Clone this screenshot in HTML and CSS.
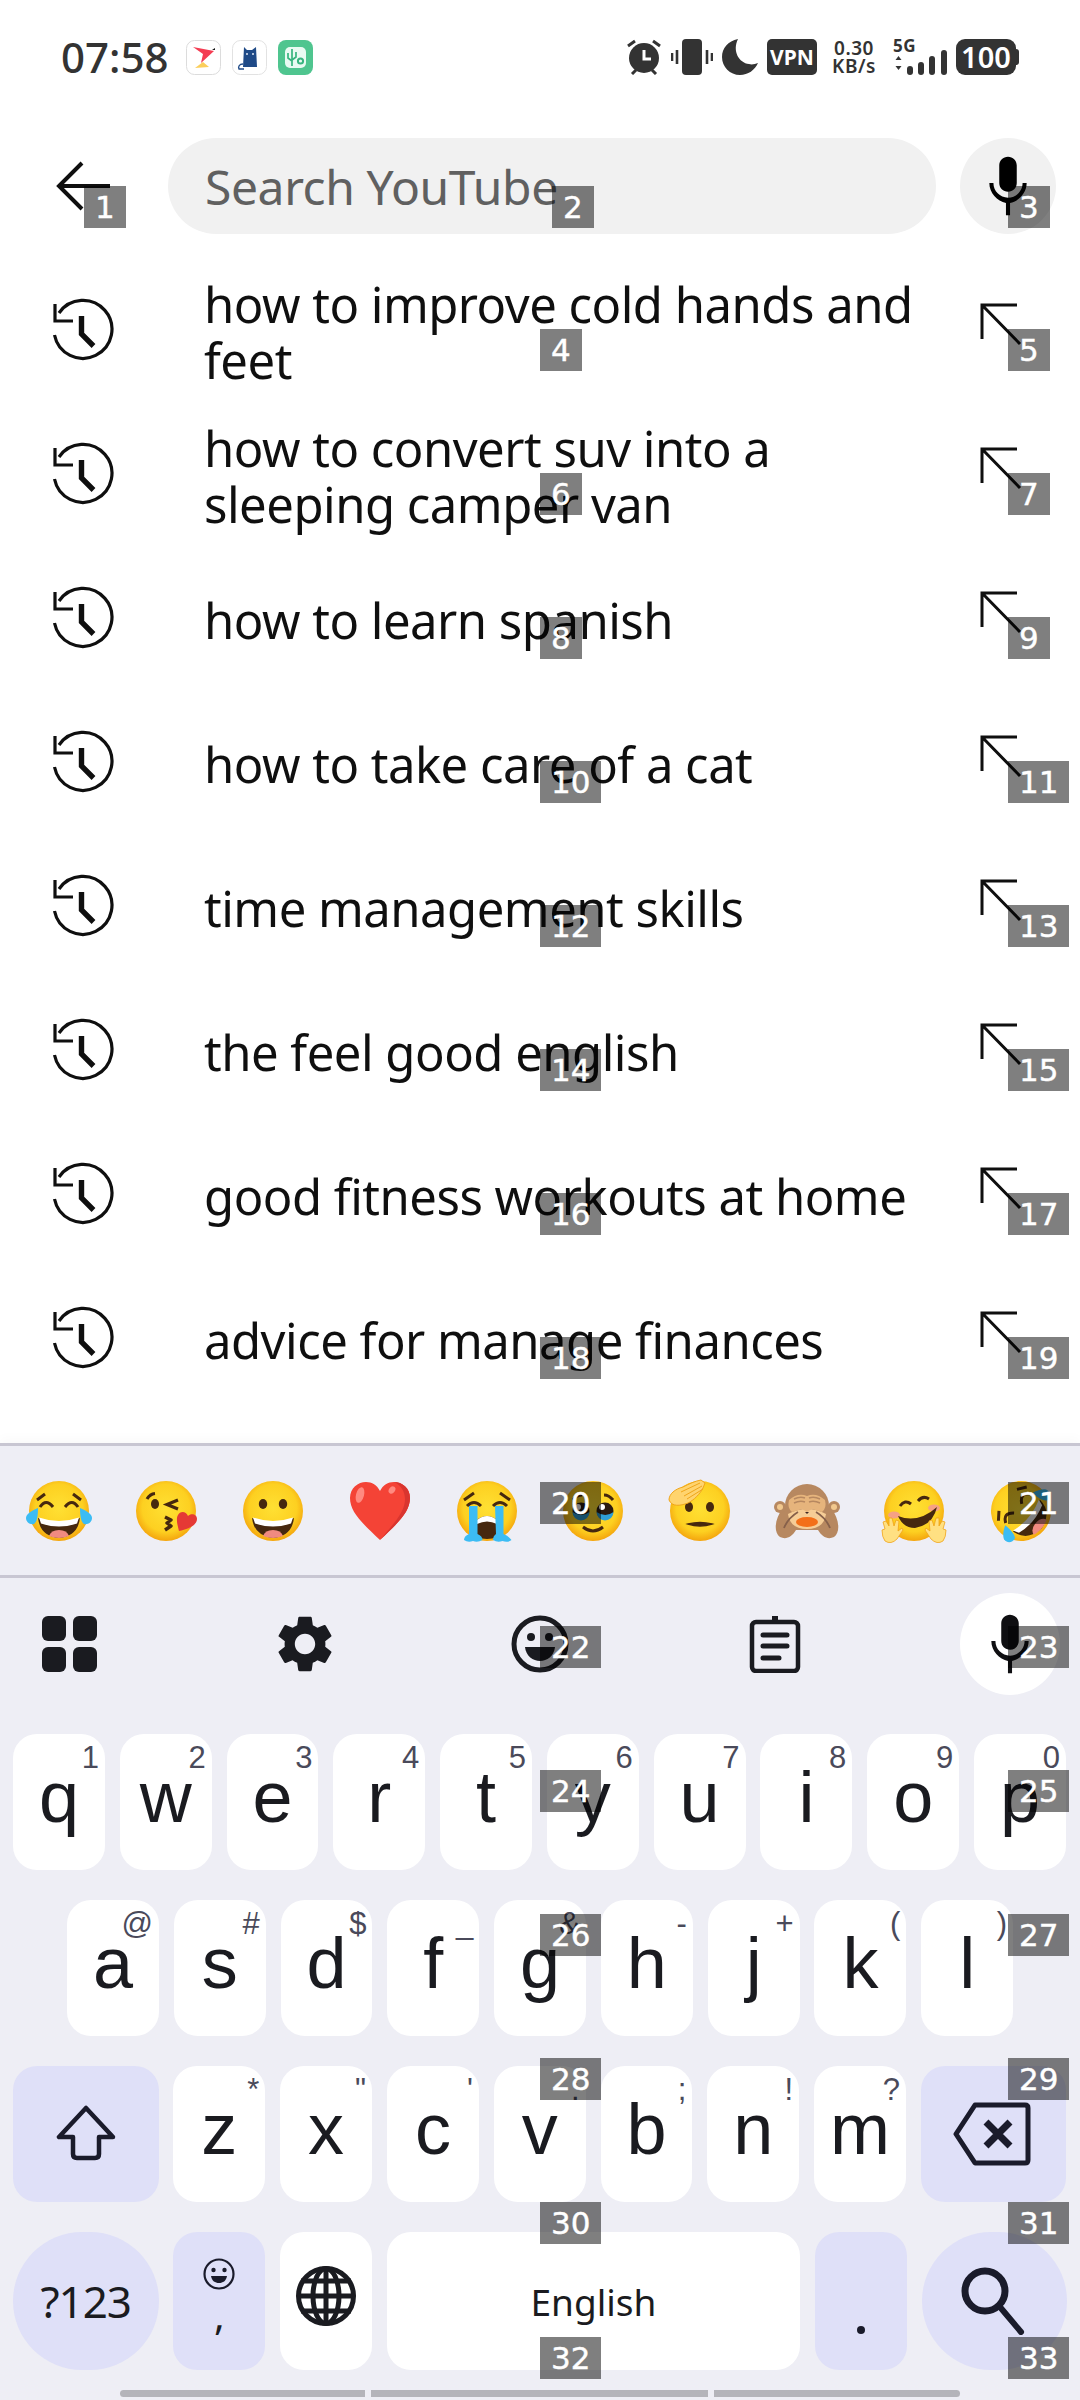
FILE: index.html
```html
<!doctype html>
<html lang="en">
<head>
    <meta charset="utf-8">
    <title>Search YouTube</title>
    <link rel="stylesheet" href="styles.css">
</head>
<body>
    <svg class="defs" width="0" height="0">
        <defs>
            <radialGradient id="faceFill" cx="50%" cy="45%" r="55%">
                <stop offset="0%" stop-color="#ffe033"/>
                <stop offset="72%" stop-color="#fdd021"/>
                <stop offset="100%" stop-color="#f4a50e"/>
            </radialGradient>
            <symbol id="face" viewBox="0 0 66 66"><circle cx="33" cy="33" r="30" fill="url(#faceFill)"/></symbol>
            <symbol id="openMouth" viewBox="0 0 66 66">
                <path d="M12 40q21 8 42 0q-2 18-21 20q-19-2-21-20z" fill="#46280f"/>
                <path d="M13 39.500q20 7 40 0l-2 6q-18 6-36 0z" fill="#fff"/>
                <path d="M23 58q2-6 10-6t10 6q-10 4-20 0z" fill="#f08a80"/>
            </symbol>
            <symbol id="laugh" viewBox="0 0 66 66">
                <use href="#face" width="66" height="66"/>
                <path d="M11 22l8-6M47 16l8 6M14 29q6-9 13 0M39 29q7-9 13 0" fill="none" stroke="#46280f" stroke-width="3"/>
                <use href="#openMouth" width="66" height="66"/>
                <path d="M12 30c0 8-1 14-4 16-4 1-8-2-8-6 0-3 4-7 12-10zM54 30c0 8 1 14 4 16 4 1 8-2 8-6 0-3-4-7-12-10z" fill="#3cbcf4"/>
            </symbol>
            <symbol id="mic" viewBox="0 0 24 24"><path d="M12 14c1.66 0 3-1.34 3-3V5c0-1.66-1.34-3-3-3S9 3.34 9 5v6c0 1.66 1.34 3 3 3zm5-3c0 2.76-2.24 5-5 5s-5-2.24-5-5H5.600c0 3.400 2.700 6.200 5.700 6.800V22h1.400v-4.200c3-.6 5.700-3.400 5.700-6.800H17z"/></symbol>
            <symbol id="history" viewBox="0 0 64 64">
                <path d="M7 15a29 29 0 1 1-4.500 22" fill="none" stroke="#0f0f0f" stroke-width="3.200"/>
                <path d="M3 6v17h18" fill="none" stroke="#0f0f0f" stroke-width="3.200"/>
                <path d="M29.500 18v18l12 12" fill="none" stroke="#0f0f0f" stroke-width="5.400"/>
            </symbol>
            <symbol id="fill" viewBox="0 0 44 44">
                <path d="M38 2H3v34M3 2l38 39" fill="none" stroke="#0f0f0f" stroke-width="3"/>
            </symbol>
        </defs>
    </svg>

    <header class="status-bar">
        <span class="clock">07:58</span>
        <svg class="app-icon" viewBox="0 0 35 35">
            <rect x=".5" y=".5" width="34" height="34" rx="8" fill="#fff" stroke="#dcdcdc"/>
            <path d="M7 7l21 4-13 12 2-9z" fill="#f43c52"/>
            <path d="M26 10l3-2v2z" fill="#111"/>
            <path d="M9 28l8-6 6 5z" fill="#fbce5b"/>
        </svg>
        <svg class="app-icon" viewBox="0 0 35 35">
            <rect x=".5" y=".5" width="34" height="34" rx="8" fill="#fff" stroke="#e2e2e2"/>
            <path d="M12 7l3 3h5l4-3 1 20H11z" fill="#1f4a87"/>
            <path d="M11 24c-4 0-5 3-4 5h5" fill="none" stroke="#1f4a87" stroke-width="1.400"/>
            <circle cx="15" cy="14" r="1" fill="#dfe8f5"/>
            <circle cx="21" cy="14" r="1" fill="#dfe8f5"/>
        </svg>
        <svg class="app-icon" viewBox="0 0 35 35">
            <rect width="35" height="35" rx="8" fill="#4fc58f"/>
            <rect x="7" y="7" width="21" height="21" rx="5" fill="#e9faf2"/>
            <path d="M14 9v17M10 13v5l4 3M18 12v5l-4 3" fill="none" stroke="#38b57f" stroke-width="1.700"/>
            <circle cx="22.500" cy="21" r="2.600" fill="none" stroke="#38b57f" stroke-width="2"/>
        </svg>

        <div class="status-right">
            <svg class="status-icon" width="36" height="36" viewBox="0 0 36 36">
                <circle cx="18" cy="19" r="15" fill="#333"/>
                <path d="M18 11v9h7" fill="none" stroke="#fff" stroke-width="3"/>
                <path d="M2 7l7-5M34 7l-7-5M6 35l4-4M30 35l-4-4" fill="none" stroke="#333" stroke-width="3"/>
            </svg>
            <svg class="status-icon" width="42" height="36" viewBox="0 0 42 36">
                <rect x="11" width="20" height="36" rx="4" fill="#333"/>
                <path d="M6 11v14M1 14v8M36 11v14M41 14v8" stroke="#333" stroke-width="2.600"/>
            </svg>
            <svg class="status-icon" width="36" height="36" viewBox="0 0 36 36">
                <path d="M16 0C6 2 0 9 0 18c0 10 8 18 18 18 8 0 15-5 18-12-3 1-6 2-9 1C17 24 10 12 16 0z" fill="#333"/>
            </svg>
            <span class="vpn">VPN</span>
            <div class="speed"><span>0.30</span><span>KB/s</span></div>
            <div class="net">
                <span class="net-label">5G</span>
                <svg class="status-icon" width="54" height="36" viewBox="0 0 54 36">
                    <path d="M5.500 17l3 4h-6zM5.500 31l3-4h-6z" fill="#333"/>
                    <rect x="14" y="27" width="6" height="9" rx="3" fill="#333"/>
                    <rect x="25" y="23" width="6" height="13" rx="3" fill="#333"/>
                    <rect x="36" y="17" width="6" height="19" rx="3" fill="#333"/>
                    <rect x="48" y="11" width="6" height="25" rx="3" fill="#333"/>
                </svg>
            </div>
            <div class="battery"><span class="battery-level">100</span><span class="battery-nub"></span></div>
        </div>
    </header>

    <section class="search-row">
        <svg class="back" width="168" height="96" viewBox="0 0 168 96">
            <path d="M110 48H60M82 25L59 48l23 23" fill="none" stroke="#0f0f0f" stroke-width="4"/>
        </svg>
        <div class="search-box">Search YouTube</div>
        <div class="voice-btn"><svg width="70" height="70"><use href="#mic"/></svg></div>
        <span class="tag tag-back">1</span>
        <span class="tag tag-search">2</span>
        <span class="tag tag-mic">3</span>
    </section>

    <ul class="suggestions">
        <li class="item">
            <svg class="ico-history"><use href="#history"/></svg>
            <span class="query">how to improve cold hands and feet</span>
            <svg class="ico-fill"><use href="#fill"/></svg>
            <span class="tag tag-mid">4</span><span class="tag tag-end">5</span>
        </li>
        <li class="item">
            <svg class="ico-history"><use href="#history"/></svg>
            <span class="query">how to convert suv into a sleeping camper van</span>
            <svg class="ico-fill"><use href="#fill"/></svg>
            <span class="tag tag-mid">6</span><span class="tag tag-end">7</span>
        </li>
        <li class="item">
            <svg class="ico-history"><use href="#history"/></svg>
            <span class="query">how to learn spanish</span>
            <svg class="ico-fill"><use href="#fill"/></svg>
            <span class="tag tag-mid">8</span><span class="tag tag-end">9</span>
        </li>
        <li class="item">
            <svg class="ico-history"><use href="#history"/></svg>
            <span class="query">how to take care of a cat</span>
            <svg class="ico-fill"><use href="#fill"/></svg>
            <span class="tag tag-mid">10</span><span class="tag tag-end">11</span>
        </li>
        <li class="item">
            <svg class="ico-history"><use href="#history"/></svg>
            <span class="query">time management skills</span>
            <svg class="ico-fill"><use href="#fill"/></svg>
            <span class="tag tag-mid">12</span><span class="tag tag-end">13</span>
        </li>
        <li class="item">
            <svg class="ico-history"><use href="#history"/></svg>
            <span class="query">the feel good english</span>
            <svg class="ico-fill"><use href="#fill"/></svg>
            <span class="tag tag-mid">14</span><span class="tag tag-end">15</span>
        </li>
        <li class="item">
            <svg class="ico-history"><use href="#history"/></svg>
            <span class="query">good fitness workouts at home</span>
            <svg class="ico-fill"><use href="#fill"/></svg>
            <span class="tag tag-mid">16</span><span class="tag tag-end">17</span>
        </li>
        <li class="item">
            <svg class="ico-history"><use href="#history"/></svg>
            <span class="query">advice for manage finances</span>
            <svg class="ico-fill"><use href="#fill"/></svg>
            <span class="tag tag-mid">18</span><span class="tag tag-end">19</span>
        </li>
    </ul>

    <section class="keyboard">
        <div class="emoji-row">
            <svg class="emoji" viewBox="0 0 66 66"><use href="#laugh"/></svg>
            <svg class="emoji" viewBox="0 0 66 66">
                <use href="#face"/>
                <ellipse cx="22" cy="26" rx="4" ry="5" fill="#46280f"/>
                <path d="M14 21q3-5 8-5.500M45 22l-11 4.500 11 4.500" fill="none" stroke="#46280f" stroke-width="3.200"/>
                <path d="M32 39l6 3-4 3 4 3-6 4" fill="none" stroke="#46280f" stroke-width="3.400" stroke-linejoin="round"/>
                <path d="M46 53c-2-7-3-13-1-16 2-4 8-4 10 1 3-3 9-2 9 3 0 6-8 10-18 12z" fill="#e53935"/>
            </svg>
            <svg class="emoji" viewBox="0 0 66 66">
                <use href="#face"/>
                <ellipse cx="23" cy="26" rx="4.200" ry="5" fill="#46280f"/>
                <ellipse cx="43" cy="26" rx="4.200" ry="5" fill="#46280f"/>
                <use href="#openMouth"/>
            </svg>
            <svg class="emoji" viewBox="-3 -3 66 66">
                <path d="M30 59C12 42 0 31 0 17 0 7 8 1 16 1c6 0 11 3 14 9 3-6 8-9 14-9 8 0 16 6 16 16 0 14-12 25-30 42z" fill="#f44336"/>
                <path d="M44 1c8 0 16 6 16 16 0 14-12 25-30 42 14-17 25-28 25-41 0-7-4-14-11-17z" fill="#d9352f"/>
                <ellipse cx="10" cy="14" rx="4" ry="8" transform="rotate(15 10 14)" fill="#ff8a80"/>
                <ellipse cx="42" cy="9" rx="3" ry="4" transform="rotate(35 42 9)" fill="#ff8a80"/>
            </svg>
            <svg class="emoji" viewBox="0 0 66 66">
                <use href="#face"/>
                <path d="M10 22l10-7M46 15l10 7M13 28q7-7 14 0M39 28q7-7 14 0" fill="none" stroke="#46280f" stroke-width="3"/>
                <path d="M23 42q10-8 20 0v17q-10 4-20 0z" fill="#46280f"/>
                <path d="M23 42q10-8 20 0v4q-10-5-20 0z" fill="#fff"/>
                <path d="M15 28h8.500v28q5 2 5 6-5 3-9.500 1-5 2-9-1 0-4 5-6zM41 28h8.500v28q5 2 8 6-4 3-9 1-5 2-9.500-1 0-4 3-6z" fill="#3cbcf4"/>
            </svg>
            <svg class="emoji" viewBox="0 0 66 66">
                <use href="#face"/>
                <circle cx="21" cy="33" r="8.500" fill="#2a1b10"/>
                <circle cx="45" cy="33" r="8.500" fill="#2a1b10"/>
                <path d="M12.500 34a8.500 8.500 0 0 0 17 0q-8 6-17 0zM36.500 34a8.500 8.500 0 0 0 17 0q-8 6-17 0z" fill="#2f9fd6"/>
                <circle cx="18" cy="29" r="3" fill="#fff"/>
                <circle cx="42" cy="29" r="3" fill="#fff"/>
                <path d="M13 22q4-5 9-5M44 17q5 0 9 5M23 49q10 8 20 0" fill="none" stroke="#46280f" stroke-width="3"/>
            </svg>
            <svg class="emoji" viewBox="0 0 66 66">
                <use href="#face"/>
                <ellipse cx="22" cy="29" rx="4" ry="5" fill="#46280f"/>
                <ellipse cx="43" cy="29" rx="4" ry="5" fill="#46280f"/>
                <path d="M21 46q12-3 24 0-12 4-24 0z" fill="#46280f" stroke="#46280f" stroke-width="1.500"/>
                <path d="M2 22c0-6 6-11 14-13 6-3 12-6 18-7l4 3-2 5c-3 6-9 12-15 15-8 3-16 4-19-3z" fill="#ffd46e" stroke="#f0a51a"/>
                <path d="M14 14L33 5M17 18L35 8M20 21L36 11" fill="none" stroke="#f0a51a"/>
            </svg>
            <svg class="emoji" viewBox="0 0 66 66">
                <path d="M9 30C1 40-1 54 6 59c6 3 12 0 16-7h22c4 7 10 10 16 7 7-5 5-19-3-29z" fill="#b78860"/>
                <circle cx="6" cy="29" r="6" fill="#b78860"/>
                <circle cx="60" cy="29" r="6" fill="#b78860"/>
                <circle cx="6" cy="29" r="3" fill="#f1c88e"/>
                <circle cx="60" cy="29" r="3" fill="#f1c88e"/>
                <circle cx="33" cy="28" r="22" fill="#b78860"/>
                <path d="M14 36q19-10 38 0-2 15-19 15T14 36z" fill="#f6cd96"/>
                <path d="M15 22q9-8 18-4 9-4 18 4 2 8-3 12l-10-3-5 3-5-3-10 3q-5-4-3-12z" fill="#e6b47c"/>
                <path d="M20 21q6-3 11-1M20 25q6-3 11-1M35 20q5-2 11 1M35 24q5-2 11 1" fill="none" stroke="#b78860" stroke-width="1.500"/>
                <ellipse cx="33" cy="44" rx="11" ry="5" fill="#f36f19"/>
                <path d="M31 34h4l-2 2z" fill="#3e2723"/>
                <path d="M10 50q4-10 14-16M56 50q-4-10-14-16" fill="none" stroke="#86604a" stroke-width="1.800"/>
            </svg>
            <svg class="emoji" viewBox="0 0 66 66">
                <use href="#face"/>
                <ellipse cx="13" cy="37" rx="6" ry="3.500" fill="#f6a184"/>
                <ellipse cx="53" cy="30" rx="6" ry="3.500" fill="#f6a184"/>
                <path d="M19 28q5-7 11-2M37 23q5-6 11-2" fill="none" stroke="#46280f" stroke-width="3"/>
                <path d="M17 38q20 8 39-9-4 18-22 21-12 0-17-12z" fill="#46280f"/>
                <path d="M1 52l3-1-2-7 3-1 3 5 0-8 3 0 2 8 2-6 3 1-1 10 4-3 1 2-6 9q-6 6-12 2-3-4-3-11zM65 52l-3-1 2-7-3-1-3 5 0-8-3 0-2 8-2-6-3 1 1 10-4-3-1 2 6 9q6 6 12 2 3-4 3-11z" fill="#ffe082" stroke="#f0a51a" stroke-width=".8"/>
            </svg>
            <svg class="emoji" viewBox="0 0 66 66"><g transform="rotate(-50 33 33)"><use href="#laugh"/></g></svg>
            <span class="tag tag-mid tag-emoji">20</span><span class="tag tag-end tag-emoji">21</span>
        </div>

        <div class="toolbar">
            <div class="tool">
                <svg width="56" height="56" viewBox="0 0 56 56" fill="#1a1b20">
                    <rect width="24" height="25" rx="6"/><rect x="31" width="24" height="25" rx="6"/>
                    <rect y="31" width="24" height="25" rx="6"/><rect x="31" y="31" width="24" height="25" rx="6"/>
                </svg>
            </div>
            <div class="tool">
                <svg width="68" height="68" viewBox="0 0 24 24" fill="#1a1b20"><path d="M19.140 12.940c.04-.3.06-.61.06-.94 0-.32-.02-.64-.07-.94l2.030-1.580c.18-.14.23-.41.12-.61l-1.920-3.320c-.12-.22-.37-.29-.59-.22l-2.390.96c-.5-.38-1.030-.7-1.620-.94l-.36-2.540c-.04-.24-.24-.41-.48-.41h-3.840c-.24 0-.43.17-.47.41l-.36 2.540c-.59.24-1.130.57-1.620.94l-2.390-.96c-.22-.08-.47 0-.59.22L2.740 8.870c-.12.21-.08.47.12.61l2.030 1.580c-.05.3-.09.63-.09.94s.02.64.07.94l-2.030 1.580c-.18.14-.23.41-.12.61l1.920 3.320c.12.22.37.29.59.22l2.390-.96c.5.38 1.030.7 1.620.94l.36 2.540c.05.24.24.41.48.41h3.840c.24 0 .44-.17.47-.41l.36-2.540c.59-.24 1.130-.56 1.620-.94l2.390.96c.22.08.47 0 .59-.22l1.920-3.320c.12-.22.07-.47-.12-.61l-2.010-1.580zM12 15.600c-1.980 0-3.600-1.620-3.600-3.600s1.620-3.600 3.600-3.600 3.600 1.620 3.600 3.600-1.620 3.600-3.600 3.600z"/></svg>
            </div>
            <div class="tool">
                <svg width="58" height="58" viewBox="0 0 58 58">
                    <circle cx="29" cy="29" r="26" fill="none" stroke="#1a1b20" stroke-width="5"/>
                    <circle cx="20" cy="22" r="4" fill="#1a1b20"/><circle cx="38" cy="22" r="4" fill="#1a1b20"/>
                    <path d="M14 32h30c-1 9-8 14-15 14s-14-5-15-14z" fill="#1a1b20"/>
                </svg>
            </div>
            <div class="tool">
                <svg width="52" height="58" viewBox="0 0 52 58" fill="none" stroke="#1a1b20">
                    <rect x="3" y="7" width="46" height="49" rx="4" stroke-width="4.500"/>
                    <path d="M26 1v6" stroke-width="6"/>
                    <path d="M14 20h24M14 31h24M14 43h16" stroke-width="5" stroke-linecap="round"/>
                </svg>
            </div>
            <div class="tool tool-active"><svg width="70" height="70" fill="#0f0f12"><use href="#mic"/></svg></div>
            <span class="tag tag-mid tag-tools">22</span><span class="tag tag-end tag-tools">23</span>
        </div>

        <div class="key-row">
            <div class="key">q<i class="hint">1</i></div>
            <div class="key">w<i class="hint">2</i></div>
            <div class="key">e<i class="hint">3</i></div>
            <div class="key">r<i class="hint">4</i></div>
            <div class="key">t<i class="hint">5</i></div>
            <div class="key">y<i class="hint">6</i></div>
            <div class="key">u<i class="hint">7</i></div>
            <div class="key">i<i class="hint">8</i></div>
            <div class="key">o<i class="hint">9</i></div>
            <div class="key">p<i class="hint">0</i></div>
            <span class="tag tag-mid tag-row1">24</span><span class="tag tag-end tag-row1">25</span>
        </div>
        <div class="key-row key-row-inset">
            <div class="key">a<i class="hint">@</i></div>
            <div class="key">s<i class="hint">#</i></div>
            <div class="key">d<i class="hint">$</i></div>
            <div class="key">f<i class="hint">_</i></div>
            <div class="key">g<i class="hint">&amp;</i></div>
            <div class="key">h<i class="hint">-</i></div>
            <div class="key">j<i class="hint">+</i></div>
            <div class="key">k<i class="hint">(</i></div>
            <div class="key">l<i class="hint">)</i></div>
            <span class="tag tag-mid tag-row2">26</span><span class="tag tag-end tag-row2">27</span>
        </div>
        <div class="key-row">
            <div class="key key-wide key-alt">
                <svg width="60" height="58" viewBox="0 0 60 58" fill="none" stroke="#1a1b2b" stroke-width="4.500" stroke-linejoin="round"><path d="M30 3L3 32h14v17q0 4 4 4h18q4 0 4-4V32h14z"/></svg>
            </div>
            <div class="key">z<i class="hint">*</i></div>
            <div class="key">x<i class="hint">"</i></div>
            <div class="key">c<i class="hint">'</i></div>
            <div class="key">v<i class="hint">:</i></div>
            <div class="key">b<i class="hint">;</i></div>
            <div class="key">n<i class="hint">!</i></div>
            <div class="key">m<i class="hint">?</i></div>
            <div class="key key-wide key-alt">
                <svg class="del-icon" width="78" height="64" viewBox="0 0 78 64" fill="none" stroke="#1a1b2b" stroke-linejoin="round"><path d="M22 3h50q3 0 3 3v52q0 3-3 3H22L3 32z" stroke-width="5"/><path d="M33 20l24 24M57 20L33 44" stroke-width="7"/></svg>
            </div>
            <span class="tag tag-mid tag-row3">28</span><span class="tag tag-end tag-row3">29</span>
        </div>
        <div class="key-row key-row-last">
            <div class="key key-wide key-alt key-round key-label">?123</div>
            <div class="key key-alt key-comma">
                <svg width="32" height="32" viewBox="0 0 32 32" fill="none" stroke="#1a1b2b" stroke-width="2.200"><circle cx="16" cy="16" r="14.500"/><circle cx="10.500" cy="12" r="2.200" fill="#1a1b2b" stroke="none"/><circle cx="21.500" cy="12" r="2.200" fill="#1a1b2b" stroke="none"/><path d="M8 18h16c-1 5-4 7-8 7s-7-2-8-7z" fill="#1a1b2b" stroke="none"/></svg>
                <span class="comma">,</span>
            </div>
            <div class="key">
                <svg width="62" height="62" viewBox="0 0 62 62" fill="none" stroke="#1a1b20" stroke-width="5"><circle cx="31" cy="31" r="27.500"/><ellipse cx="31" cy="31" rx="13" ry="27.500"/><path d="M31 3v56M6 16h50M3 31h56M6 46h50"/></svg>
            </div>
            <div class="key key-space">English</div>
            <div class="key key-alt key-dot"><span class="dot"></span></div>
            <div class="key key-wide key-alt key-round">
                <svg width="66" height="68" viewBox="0 0 66 68" fill="none" stroke="#1a1b2b" stroke-width="7" stroke-linecap="round"><circle cx="24" cy="24" r="20"/><path d="M39 40l21 25" stroke-width="6"/></svg>
            </div>
            <span class="tag tag-mid tag-row4-top">30</span><span class="tag tag-end tag-row4-top">31</span>
            <span class="tag tag-mid tag-row4-bot">32</span><span class="tag tag-end tag-row4-bot">33</span>
        </div>

        <div class="nav-bar"><span class="nav-a"></span><span class="nav-b"></span><span class="nav-c"></span></div>
    </section>
</body>
</html>
```

FILE: styles.css
```css
html, body {
    margin: 0;
    padding: 0;
    width: 1080px;
    height: 2400px;
    overflow: hidden;
    background: #fff;
    font-family: "Noto Sans", sans-serif;
    color: #0f0f0f;
}

.defs { position: absolute; }

/* numbered boxes laid over the screen */
.tag {
    position: absolute;
    height: 42px;
    padding: 0 11px;
    background: rgba(0,0,0,.5);
    color: #fff;
    font: 400 31px/42px "DejaVu Sans", sans-serif;
    -webkit-text-stroke: .4px #fff;
    text-align: center;
}
.tag-back   { left: 84px; top: 48px; }
.tag-search { left: 552px; top: 48px; }
.tag-mic    { left: 1008px; top: 48px; }
.tag-mid    { left: 540px; top: 72px; }
.tag-end    { left: 1008px; top: 72px; }
.tag-emoji  { top: 36px; }
.tag-tools  { top: 48px; }
.tag-row1   { top: 36px; }
.tag-row2   { top: 14px; }
.tag-row3   { top: -8px; }
.tag-row4-top { top: -30px; }
.tag-row4-bot { top: 105px; }

/* status bar */
.status-bar {
    display: flex;
    align-items: center;
    height: 36px;
    padding: 39px 61px 0 61px;
    margin-bottom: 63px;
    color: #333;
}
.clock {
    font-size: 42px;
    font-weight: 500;
    line-height: 36px;
    margin-right: 17px;
}
.app-icon { width: 35px; height: 35px; margin-right: 11px; }
.status-right {
    display: flex;
    align-items: center;
    margin-left: auto;
    gap: 9px;
}
.status-icon { display: block; }
.vpn {
    width: 50px;
    height: 36px;
    border-radius: 5px;
    background: #333;
    color: #fff;
    font-size: 21px;
    font-weight: 700;
    line-height: 36px;
    text-align: center;
}
.speed {
    display: flex;
    flex-direction: column;
    align-items: center;
    width: 46px;
    margin: 0 7px 0 5px;
    font-size: 19px;
    font-weight: 600;
    line-height: 18px;
    letter-spacing: .5px;
}
.net { position: relative; }
.net-label {
    position: absolute;
    left: 0;
    top: -3px;
    font-size: 17px;
    font-weight: 700;
    line-height: 20px;
    letter-spacing: .5px;
}
.battery { display: flex; align-items: center; }
.battery-level {
    width: 60px;
    height: 36px;
    border-radius: 9px;
    background: #333;
    color: #fff;
    font-size: 29px;
    font-weight: 600;
    line-height: 36px;
    text-align: center;
}
.battery-nub {
    width: 3px;
    height: 16px;
    border-radius: 0 3px 3px 0;
    background: #333;
}

/* search */
.search-row {
    position: relative;
    display: flex;
    align-items: center;
    height: 96px;
    margin-bottom: 23px;
}
.back { flex: none; }
.search-box {
    box-sizing: border-box;
    width: 768px;
    height: 96px;
    padding-left: 37px;
    border-radius: 48px;
    background: #f1f1f1;
    color: #606060;
    font-size: 48px;
    letter-spacing: -.4px;
    line-height: 98px;
}
.voice-btn {
    display: flex;
    align-items: center;
    justify-content: center;
    width: 96px;
    height: 96px;
    margin-left: 24px;
    border-radius: 50%;
    background: #f1f1f1;
}

/* suggestions */
.suggestions { list-style: none; margin: 0 0 34px; padding: 0; }
.item {
    position: relative;
    display: flex;
    align-items: center;
    height: 144px;
}
.ico-history { flex: none; width: 64px; height: 64px; margin: 2px 88px 0 52px; }
.query {
    flex: none;
    width: 735px;
    padding-top: 6px;
    font-size: 49px;
    letter-spacing: -.5px;
    line-height: 56.500px;
}
.ico-fill { flex: none; width: 44px; height: 44px; margin: -8px 0 0 40px; }

/* keyboard */
.keyboard {
    box-sizing: border-box;
    height: 957px;
    border-top: 3px solid #c8c6d2;
    background: #eeeef5;
    box-shadow: 0 -6px 10px rgba(0,0,0,.02);
}
.emoji-row {
    position: relative;
    display: grid;
    grid-template-columns: repeat(10, 1fr);
    align-items: center;
    justify-items: center;
    height: 129px;
    padding: 0 13px;
    column-gap: 15px;
    border-bottom: 3px solid #c8c6d2;
}
.emoji { width: 66px; height: 66px; }
.toolbar {
    position: relative;
    display: flex;
    align-items: center;
    justify-content: space-between;
    height: 102px;
    padding: 15px 20px 39px;
}
.tool {
    display: flex;
    align-items: center;
    justify-content: center;
    width: 100px;
    height: 102px;
}
.tool-active { border-radius: 50%; background: #fff; }

.key-row {
    position: relative;
    display: flex;
    gap: 14.900px;
    height: 136px;
    padding: 0 13px;
    margin-bottom: 30px;
}
.key-row-inset { padding-left: 67px; }
.key-row-last { height: 138px; margin-bottom: 20px; }
.key {
    position: relative;
    display: flex;
    align-items: center;
    justify-content: center;
    flex: 0 0 91.900px;
    box-sizing: border-box;
    padding-bottom: 10px;
    border-radius: 24px;
    background: #fff;
    color: #1a1b20;
    font: 400 72px "Liberation Sans", sans-serif;
    line-height: 72px;
}
.key-wide { flex: 0 0 145.500px; padding-bottom: 0; }
.key-alt { background: #dfe0f8; }
.key-round { border-radius: 69px; }
.key-label { font: 400 44px "Noto Sans", sans-serif; letter-spacing: -1px; }
.key-space {
    flex: 1;
    padding-bottom: 0;
    font: 400 37px "Noto Sans", sans-serif;
}
.key-comma {
    flex-direction: column;
    justify-content: flex-start;
    padding: 26px 0 0;
}
.comma { margin-top: 5px; font: 400 40px/40px "Noto Sans", sans-serif; }
.key-dot { align-items: flex-end; padding: 0 0 36px; }
.dot { width: 8px; height: 8px; border-radius: 50%; background: #1a1b2b; }
.del-icon { margin-right: 4px; }
.hint {
    position: absolute;
    top: 9px;
    right: 6px;
    color: #4a4a5a;
    font: 400 31px/30px "Liberation Sans", sans-serif;
}

.nav-bar {
    display: flex;
    gap: 6px;
    height: 7px;
    padding: 0 120px;
}
.nav-bar span { display: block; background: #b4b4ba; }
.nav-a { width: 245px; border-radius: 4px 0 0 4px; }
.nav-b { width: 337px; }
.nav-c { width: 246px; border-radius: 0 4px 4px 0; }
```
